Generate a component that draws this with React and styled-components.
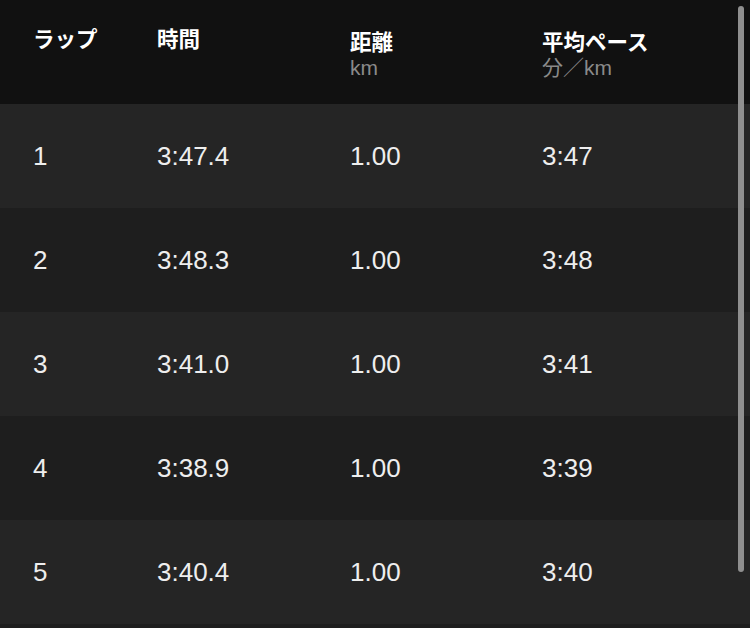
import React from "react";
import styled, { createGlobalStyle } from "styled-components";

const laps = [
    { lap: "1", time: "3:47.4", dist: "1.00", pace: "3:47" },
    { lap: "2", time: "3:48.3", dist: "1.00", pace: "3:48" },
    { lap: "3", time: "3:41.0", dist: "1.00", pace: "3:41" },
    { lap: "4", time: "3:38.9", dist: "1.00", pace: "3:39" },
    { lap: "5", time: "3:40.4", dist: "1.00", pace: "3:40" },
];

const columns = [
    { title: "ラップ" },
    { title: "時間" },
    { title: "距離", sub: "km" },
    { title: "平均ペース", sub: "分／km" },
];

const App = () => {
    return (
        <>
            <GlobalStyle />
            <Screen>
                <HeaderRow>
                    {columns.map((col) => (
                        <HeadCell key={col.title} hasSub={!!col.sub}>
                            <HeadTitle>{col.title}</HeadTitle>
                            {col.sub && <HeadSub>{col.sub}</HeadSub>}
                        </HeadCell>
                    ))}
                </HeaderRow>
                {laps.map((row, index) => (
                    <LapRow key={row.lap} odd={index % 2 === 0}>
                        <Cell>{row.lap}</Cell>
                        <Cell>{row.time}</Cell>
                        <Cell>{row.dist}</Cell>
                        <Cell>{row.pace}</Cell>
                    </LapRow>
                ))}
                {/* next lap peeks in below the fold */}
                <LapRow odd={false} />
                <ScrollThumb />
            </Screen>
        </>
    );
};

export default App;

const GlobalStyle = createGlobalStyle`
    html, body {
        margin: 0;
        padding: 0;
        background: #111111;
        overflow: hidden;
    }
`;

const Screen = styled.div`
    position: relative;
    width: 750px;
    height: 628px;
    overflow: hidden;
    background: #111111;
    font-family: "Liberation Sans", "Noto Sans CJK JP", sans-serif;
`;

const gridCols = `
    display: grid;
    grid-template-columns: 124px 193px 192px 1fr;
    padding-left: 33px;
`;

const HeaderRow = styled.div`
    ${gridCols}
    height: 104px;
    align-items: start;
    background: #111111;
`;

const HeadCell = styled.div`
    display: flex;
    flex-direction: column;
    padding-top: ${({ hasSub }) => (hasSub ? "27px" : "24px")};
`;

const HeadTitle = styled.div`
    font-family: "Noto Sans CJK JP", sans-serif;
    font-weight: 700;
    font-size: 21.5px;
    line-height: 28px;
    color: #ffffff;
`;

const HeadSub = styled.div`
    font-family: "Liberation Sans", "Noto Sans CJK JP", sans-serif;
    font-size: 21px;
    line-height: 24px;
    color: #8a8a8a;
    margin-top: 1px;
`;

const LapRow = styled.div`
    ${gridCols}
    height: 104px;
    align-items: center;
    background: ${({ odd }) => (odd ? "#252525" : "#1e1e1e")};
`;

const Cell = styled.div`
    font-size: 26px;
    color: #eeeeee;
    line-height: 30px;
`;

const ScrollThumb = styled.div`
    position: absolute;
    top: 6px;
    right: 6px;
    width: 6px;
    height: 566px;
    border-radius: 3px;
    background: #8f8f8f;
`;
